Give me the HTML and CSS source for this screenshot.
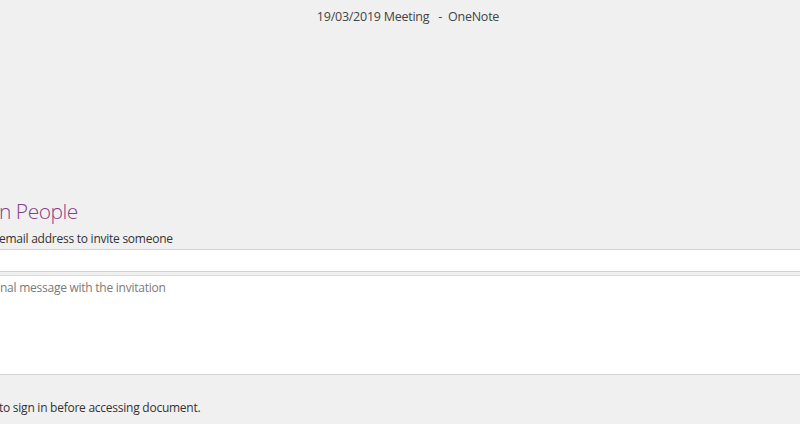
FILE: index.html
```html
<!doctype html>
<html>
<head>
    <meta charset="utf-8" />
    <title>19/03/2019 Meeting - OneNote</title>
    <link rel="stylesheet" href="styles.css">
</head>
<body>
    <div class="TitleBar">19/03/2019 Meeting&nbsp;&nbsp;&nbsp;-&nbsp;&nbsp;OneNote</div>
    <main class="Share">
        <h1 class="Share_Title">n People</h1>
        <label class="Share_Label" for="invite_el">email address to invite someone</label>
        <input id="invite_el" class="Share_Input" type="text">
        <textarea class="Share_Message" placeholder="nal message with the invitation"></textarea>
        <p class="Share_Note">to sign in before accessing document.</p>
    </main>
</body>
</html>
```

FILE: styles.css
```css
html, body {
    margin: 0;
    height: 100%;
    overflow: hidden;
}
body {
    background: #f0f0f0;
    color: #333;
    font-family: "Open Sans", "Noto Sans", sans-serif;
    font-size: 12px;
    letter-spacing: -0.25px;
}
.TitleBar {
    height: 34px;
    line-height: 33px;
    padding-left: 16px;
    text-align: center;
    color: #444;
    font-size: 12.5px;
}
.Share {
    display: flex;
    flex-direction: column;
    margin-left: -1px;
    width: 830px;
    padding-top: 162px;
}
.Share_Title {
    margin: 0;
    font-weight: 300;
    font-size: 21px;
    letter-spacing: -0.5px;
    line-height: 30px;
    color: #87418a;
}
.Share_Label {
    margin-top: 4px;
    line-height: 18px;
}
.Share_Input {
    margin: 1px 0 0;
    height: 23px;
    box-sizing: border-box;
    border: 1px solid #d2d2d2;
    background: #fff;
    font: inherit;
}
.Share_Message {
    margin: 3px 0 0;
    height: 100px;
    box-sizing: border-box;
    border: 1px solid #d2d2d2;
    border-top-color: #dcdcdc;
    padding: 3px 0;
    background: #fff;
    resize: none;
    font: inherit;
    letter-spacing: -0.25px;
}
.Share_Message::placeholder {
    color: #7a7a7a;
}
.Share_Note {
    margin: 24px 0 0;
    line-height: 18px;
}
```
